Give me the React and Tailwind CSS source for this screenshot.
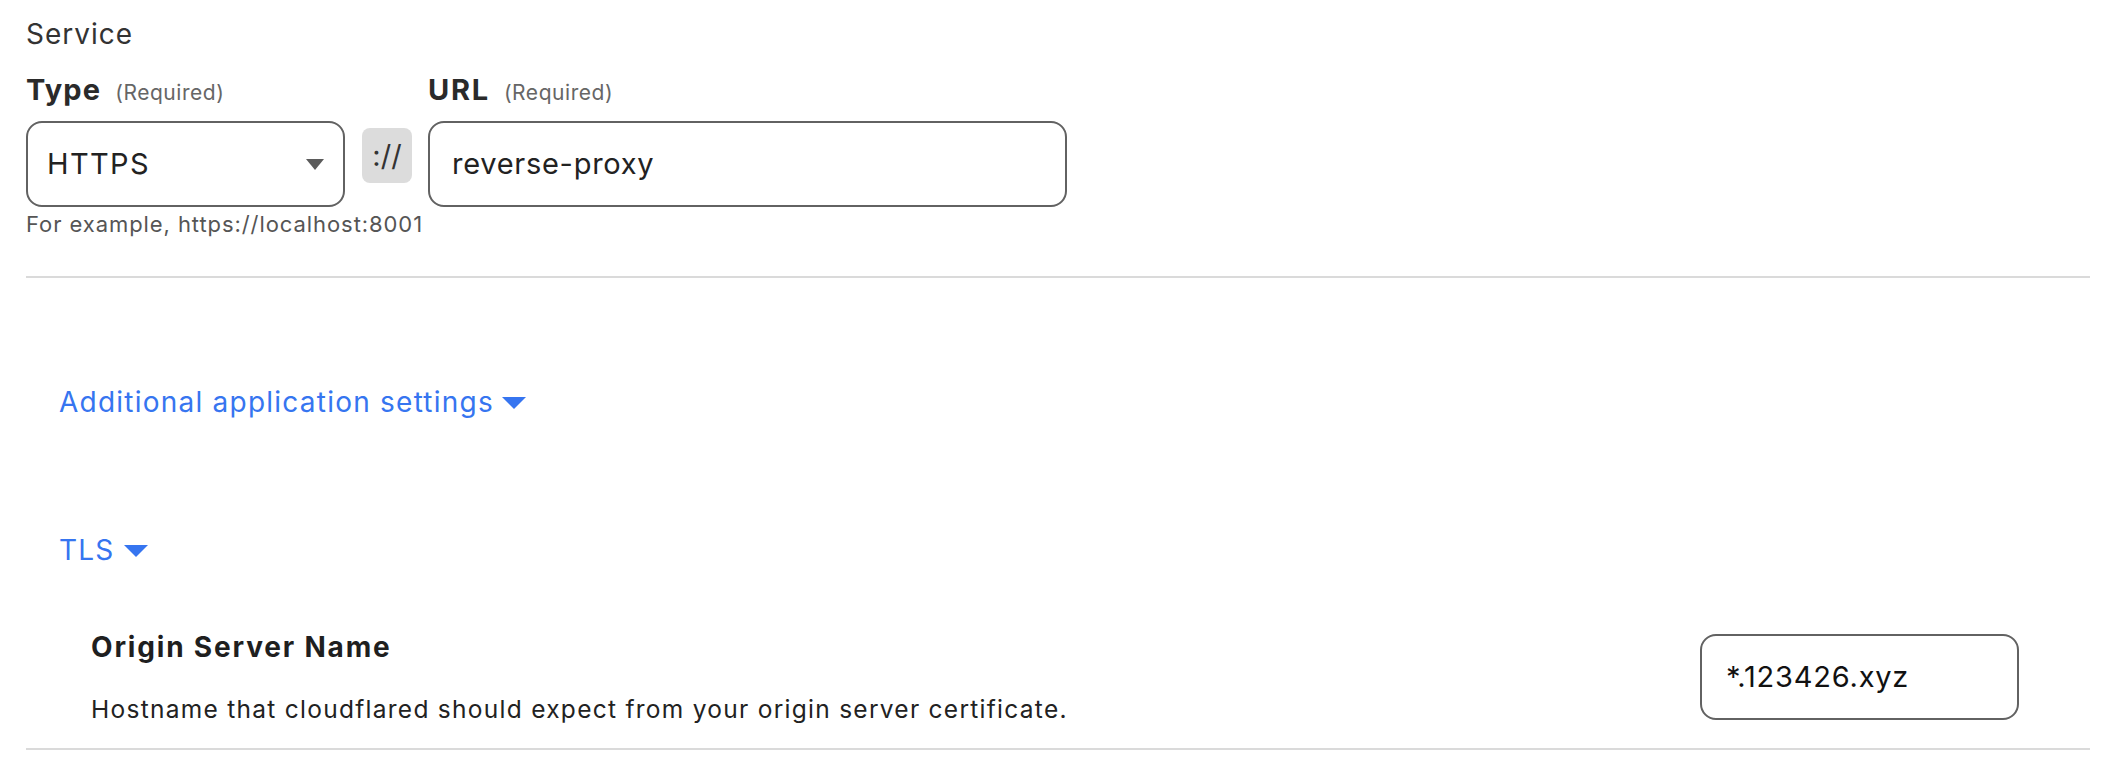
import React from "react";

function Caret({ w, h, color }) {
  return (
    <svg width={w} height={h} viewBox={`0 0 ${w} ${h}`} className="shrink-0">
      <polygon points={`0,0 ${w},0 ${w / 2},${h}`} fill={color} />
    </svg>
  );
}

export default function App() {
  return (
    <div className="w-[2120px] h-[774px] bg-white pl-[26px] pr-[30px] font-['Inter',_sans-serif] text-[#222]">
      <div className="pt-[17px] text-[28px] leading-[34px] tracking-[0.035em] text-[#333]">Service</div>

      <div className="mt-[22px] flex items-start">
        <div className="w-[319px] shrink-0">
          <div className="flex items-baseline h-[34px]">
            <span className="text-[29px] leading-[34px] font-bold tracking-[0.04em] text-[#2a2a2a]">Type</span>
            <span className="ml-[14px] text-[21px] leading-[26px] tracking-[0.026em] text-[#666]">(Required)</span>
          </div>
          <div className="mt-[14px] h-[86px] border-2 border-[#626262] rounded-[16px] flex items-center justify-between pl-[19px] pr-[19px]">
            <span className="text-[29px] leading-[34px] tracking-[0.047em] text-[#222]">HTTPS</span>
            <Caret w={18} h={11} color="#5b5b5b" />
          </div>
          <div className="mt-[4px] text-[22px] leading-[26px] tracking-[0.042em] text-[#555] whitespace-nowrap">
            For example, https://localhost:8001
          </div>
        </div>

        <div className="ml-[17px] mt-[55px] w-[50px] h-[55px] shrink-0 bg-[#dcdcdc] rounded-[8px] flex items-center justify-center text-[29px] leading-[34px] text-[#333]">
          ://
        </div>

        <div className="ml-[16px] w-[639px] shrink-0">
          <div className="flex items-baseline h-[34px]">
            <span className="text-[29px] leading-[34px] font-bold tracking-[0.06em] text-[#2a2a2a]">URL</span>
            <span className="ml-[14px] text-[21px] leading-[26px] tracking-[0.026em] text-[#666]">(Required)</span>
          </div>
          <div className="mt-[14px] h-[86px] border-2 border-[#626262] rounded-[16px] flex items-center pl-[22px]">
            <span className="text-[29px] leading-[34px] tracking-[0.025em] text-[#222]">reverse-proxy</span>
          </div>
        </div>
      </div>

      <div className="mt-[39px] h-[2px] bg-[#dadada]" />

      <div className="pl-[33px]">
        <div className="mt-[107px] flex items-center text-[28px] leading-[34px] tracking-[0.044em] text-[#3675f0]">
          <span>Additional application settings</span>
          <span className="ml-[8px] mt-[2px]">
            <Caret w={24} h={12} color="#3675f0" />
          </span>
        </div>

        <div className="mt-[114px] flex items-center text-[28px] leading-[34px] tracking-[0.044em] text-[#3675f0]">
          <span>TLS</span>
          <span className="ml-[9px] mt-[2px]">
            <Caret w={24} h={12} color="#3675f0" />
          </span>
        </div>
      </div>

      <div className="mt-[63px] pl-[65px] pr-[71px] flex items-center justify-between">
        <div>
          <div className="text-[28px] leading-[34px] font-bold tracking-[0.065em] text-[#1f1f1f]">Origin Server Name</div>
          <div className="mt-[30px] text-[24.5px] leading-[30px] tracking-[0.052em] text-[#222]">
            Hostname that cloudflared should expect from your origin server certificate.
          </div>
        </div>
        <div className="w-[319px] h-[86px] border-2 border-[#626262] rounded-[16px] flex items-center pl-[24px]">
          <span className="text-[29px] leading-[34px] tracking-[0.027em] text-[#111]">*.123426.xyz</span>
        </div>
      </div>

      <div className="mt-[24px] h-[2px] bg-[#dadada]" />
    </div>
  );
}
